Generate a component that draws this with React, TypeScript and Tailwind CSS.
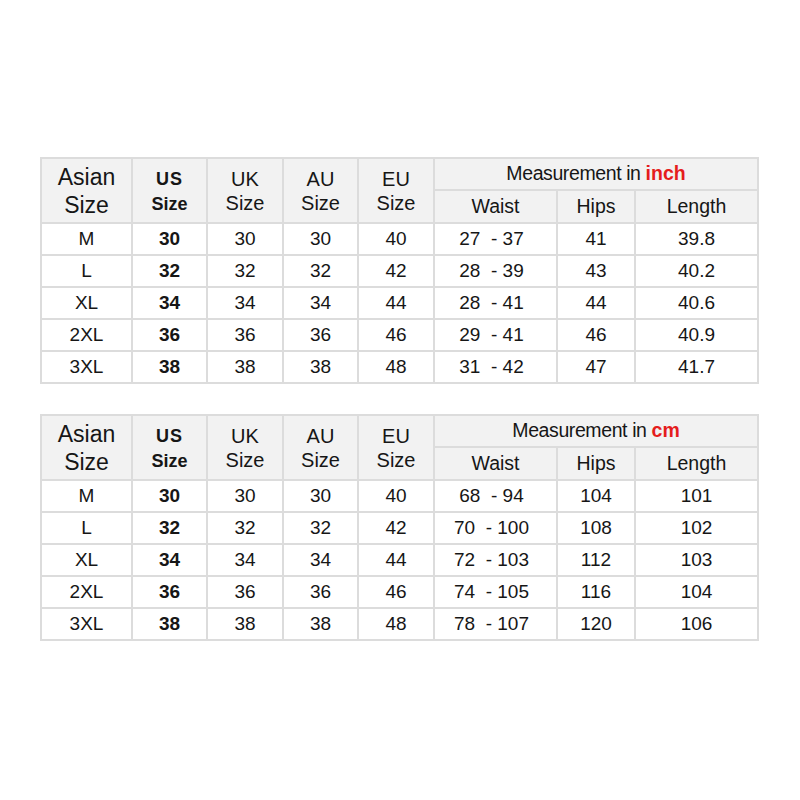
const inchRows = [
  ["M", "30", "30", "30", "40", "27  - 37", "41", "39.8"],
  ["L", "32", "32", "32", "42", "28  - 39", "43", "40.2"],
  ["XL", "34", "34", "34", "44", "28  - 41", "44", "40.6"],
  ["2XL", "36", "36", "36", "46", "29  - 41", "46", "40.9"],
  ["3XL", "38", "38", "38", "48", "31  - 42", "47", "41.7"],
];

const cmRows = [
  ["M", "30", "30", "30", "40", "68  - 94", "104", "101"],
  ["L", "32", "32", "32", "42", "70  - 100", "108", "102"],
  ["XL", "34", "34", "34", "44", "72  - 103", "112", "103"],
  ["2XL", "36", "36", "36", "46", "74  - 105", "116", "104"],
  ["3XL", "38", "38", "38", "48", "78  - 107", "120", "106"],
];

const cell = "border-2 border-[#dcdcdc] text-center align-middle p-0";
const head = cell + " bg-[#f2f2f2]";

function SizeTable({ unit, rows }: { unit: string; rows: string[][] }) {
  return (
    <table className="table-fixed border-collapse w-[717px] text-[#161616]">
      <colgroup>
        <col className="w-[91px]" />
        <col className="w-[75px]" />
        <col className="w-[76px]" />
        <col className="w-[75px]" />
        <col className="w-[76px]" />
        <col className="w-[123px]" />
        <col className="w-[78px]" />
        <col className="w-[123px]" />
      </colgroup>
      <thead>
        <tr className="h-[32px]">
          <th rowSpan={2} className={head + " font-normal text-[23px] leading-[28px]"}>
            Asian
            <br />
            Size
          </th>
          <th rowSpan={2} className={head + " font-bold text-[18px] leading-[25px] pt-[2px]"}>
            <span className="tracking-[1px]">US</span>
            <br />
            Size
          </th>
          <th rowSpan={2} className={head + " font-normal text-[20px] leading-[24px]"}>
            UK
            <br />
            Size
          </th>
          <th rowSpan={2} className={head + " font-normal text-[20px] leading-[24px]"}>
            AU
            <br />
            Size
          </th>
          <th rowSpan={2} className={head + " font-normal text-[20px] leading-[24px]"}>
            EU
            <br />
            Size
          </th>
          <th colSpan={3} className={head + " font-normal text-[19.5px] tracking-[-0.4px]"}>
            Measurement in <span className="font-bold text-[#e51d1d] tracking-normal">{unit}</span>
          </th>
        </tr>
        <tr className="h-[33px]">
          <th className={head + " font-normal text-[19.5px]"}>Waist</th>
          <th className={head + " font-normal text-[19.5px]"}>Hips</th>
          <th className={head + " font-normal text-[19.5px]"}>Length</th>
        </tr>
      </thead>
      <tbody>
        {rows.map((r, i) => (
          <tr key={i} className="h-[32px] text-[19px]">
            {r.map((v, j) => (
              <td
                key={j}
                className={
                  cell +
                  (j === 1 ? " font-bold" : "") +
                  (j === 5 ? " whitespace-pre pr-[8px]" : "")
                }
              >
                {v}
              </td>
            ))}
          </tr>
        ))}
      </tbody>
    </table>
  );
}

export default function App() {
  return (
    <div className="w-[800px] h-[800px] bg-white pt-[157px] pl-[40px] flex flex-col gap-[30px] font-['Liberation_Sans',Arial,sans-serif]">
      <SizeTable unit="inch" rows={inchRows} />
      <SizeTable unit="cm" rows={cmRows} />
    </div>
  );
}
